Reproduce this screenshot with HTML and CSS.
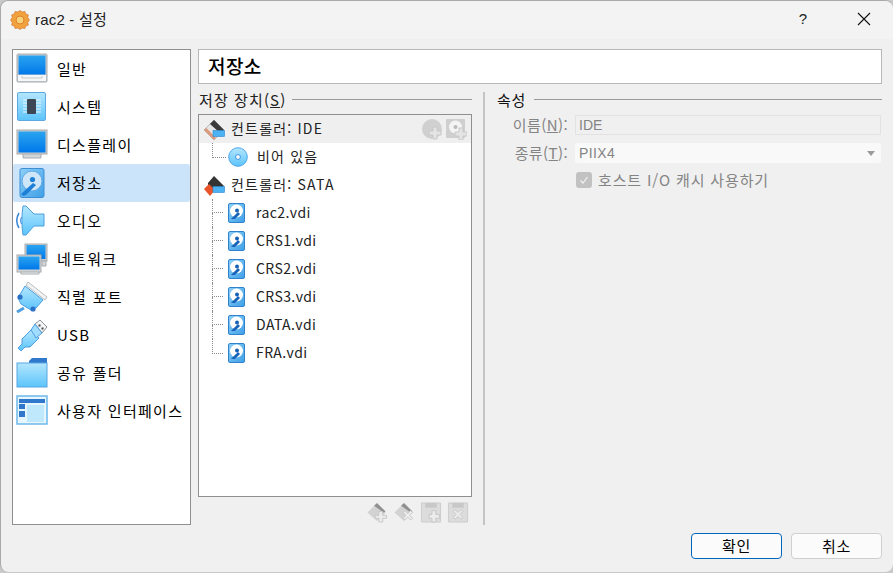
FILE: index.html
```html
<!DOCTYPE html>
<html lang="ko">
<head>
<meta charset="utf-8">
<title>rac2 - 설정</title>
<link rel="stylesheet" href="styles.css">
</head>
<body>
<svg class="defs" aria-hidden="true">
  <defs>
    <linearGradient id="blue" x1="0" y1="0" x2="0" y2="1"><stop offset="0" stop-color="#2aa4f0"/><stop offset="1" stop-color="#0078ea"/></linearGradient>
    <linearGradient id="sky" x1="0" y1="0" x2="0" y2="1"><stop offset="0" stop-color="#b4e6fe"/><stop offset="1" stop-color="#5cc4fb"/></linearGradient>
    <linearGradient id="hd" x1="0" y1="0" x2="1" y2="1"><stop offset="0" stop-color="#8dd0f8"/><stop offset="1" stop-color="#3f9fe6"/></linearGradient>

    <symbol id="i-general" viewBox="0 0 32 32">
      <rect x="1" y="1" width="30" height="28" rx="1" fill="#c9cdd0" stroke="#a8acae"/>
      <rect x="2.500" y="2.500" width="27" height="19" fill="url(#blue)"/>
      <path d="M2 22h28v6H2z" fill="#f4f6f7"/><path d="M6 23v2h20v-2" fill="none" stroke="#c4c8ca"/>
    </symbol>
    <symbol id="i-system" viewBox="0 0 32 32">
      <rect x="1.500" y="1.500" width="28" height="28" rx="1.500" fill="url(#sky)" stroke="#5ea8e0"/>
      <path d="M7 9h18M7 12h18M7 15h18M7 18h18M7 21h18" stroke="#eaf8ff" stroke-width="1.200"/>
      <rect x="11" y="8" width="9" height="15" rx="1" fill="#3d4654"/>
    </symbol>
    <symbol id="i-display" viewBox="0 0 32 32">
      <path d="M7 24h18v5H7z" fill="#d3d6d8" stroke="#a8acae"/>
      <rect x="1" y="1" width="30" height="24" fill="#c9cdd0" stroke="#a8acae"/>
      <rect x="2.500" y="2.500" width="27" height="21" fill="url(#blue)"/>
    </symbol>
    <symbol id="i-storage" viewBox="0 0 32 32">
      <rect x="4" y="1.500" width="24" height="29" rx="2" fill="url(#hd)" stroke="#3d8fd4"/>
      <circle cx="16" cy="14" r="10" fill="#cfe6f8" stroke="#5da8e6"/>
      <circle cx="16.500" cy="12.500" r="2.600" fill="#1d7fd6"/>
      <path d="M5 27l12-11 3 2-10 10-3 1z" fill="#1d7fd6"/>
    </symbol>
    <symbol id="i-audio" viewBox="0 0 32 32">
      <path d="M7 1h3l8 8h10v12H18l-8 9H7c-1.500-9-1.500-20 0-29z" fill="url(#sky)" stroke="#4d9fe0"/>
      <path d="M3 8c-3 5-3 10 0 15" fill="none" stroke="#3a86d8" stroke-width="1.500"/>
      <path d="M5.500 12c-1.200 2.500-1.200 5 0 7" fill="none" stroke="#3a86d8"/>
    </symbol>
    <symbol id="i-network" viewBox="0 0 32 32">
      <rect x="9" y="1" width="22" height="17" fill="#c9cdd0" stroke="#a8acae"/>
      <rect x="10.500" y="2" width="19" height="14" fill="url(#blue)"/>
      <path d="M26 18h4v5h-4z" fill="#d3d6d8" stroke="#a8acae"/>
      <path d="M5 26h18v5H5z" fill="#eef0f1" stroke="#a8acae"/>
      <rect x="1" y="12" width="24" height="17" fill="#d0d3d5" stroke="#a8acae"/>
      <rect x="2.500" y="13.500" width="21" height="13" fill="url(#blue)"/>
    </symbol>
    <symbol id="i-serial" viewBox="0 0 32 32">
      <path d="M8 27L1 31" stroke="#4d9fe0" stroke-width="3"/>
      <path d="M9 5l18 14-7 8-5 2-10-6-3-6z" fill="url(#sky)" stroke="#4d9fe0"/>
      <path d="M12 1l19 15-2 3L10 4z" fill="#f2f3f4" stroke="#a8acae" stroke-width=".8"/>
      <circle cx="4" cy="16" r="2.600" fill="#2a72c8"/><circle cx="17" cy="28" r="2.600" fill="#2a72c8"/>
    </symbol>
    <symbol id="i-usb" viewBox="0 0 32 32">
      <path d="M2 29l4-4 0-5 9-9 8 8-9 9h-5l-4 4z" fill="url(#sky)" stroke="#4d9fe0"/>
      <path d="M19 5l5-4 7 7-5 6z" fill="#f3f5f6" stroke="#8c9094"/>
      <rect x="22.500" y="5.500" width="2" height="2" fill="#444"/><rect x="25.500" y="8.500" width="2" height="2" fill="#444"/>
      <path d="M15 11l4-6 7 9-6 5z" fill="#9fdcfd" stroke="#4d9fe0"/>
    </symbol>
    <symbol id="i-folder" viewBox="0 0 32 32">
      <path d="M13 4l3-3h15v6H13z" fill="#2f78cc"/>
      <rect x="1" y="6" width="30" height="24" fill="url(#sky)" stroke="#56a6e4"/>
    </symbol>
    <symbol id="i-ui" viewBox="0 0 32 32">
      <rect x="1" y="1" width="30" height="28" fill="#e6f6ff" stroke="#6db8ea" stroke-width="1.500"/>
      <rect x="3" y="4" width="26" height="4" fill="#2f78cc"/>
      <rect x="3" y="9" width="6" height="5" fill="#2f78cc"/>
      <rect x="3" y="16" width="6" height="6" fill="#2f78cc"/>
      <rect x="11" y="10" width="17" height="17" fill="#bfe8fd"/>
    </symbol>
    <symbol id="i-ctrl" viewBox="0 0 23 23">
      <path d="M2 12L12 2l10 10-10 10z" fill="#e6e6e6" stroke="#a0a0a0" stroke-width=".7"/>
      <path d="M2 12l10 10 2-2L4.500 10z" fill="#dd9a7c"/>
      <path d="M12 2l10 10-4 3L8 6z" fill="#3a3a3a"/>
      <rect x="11" y="12.500" width="11.500" height="6" fill="#4db2f2" stroke="#2a86d0" stroke-width=".6"/>
    </symbol>
    <symbol id="i-ctrl-sata" viewBox="0 0 23 23">
      <path d="M12 2l10 10-3 3H6V9z" fill="#333"/>
      <path d="M2 15l5-5 6 6-5 6z" fill="#e8532a"/>
      <rect x="11" y="12.500" width="11.500" height="6" fill="#4db2f2" stroke="#2a86d0" stroke-width=".6"/>
    </symbol>
    <symbol id="i-cd" viewBox="0 0 20 20">
      <circle cx="10" cy="10" r="9.300" fill="url(#sky)" stroke="#4da6ea"/>
      <circle cx="10" cy="10" r="2.400" fill="#fff" stroke="#3d93dd"/>
    </symbol>
    <symbol id="i-vdi" viewBox="0 0 18 20">
      <rect x=".5" y=".5" width="16" height="19" rx="1.500" fill="url(#hd)" stroke="#2f82cc"/>
      <circle cx="8.500" cy="8" r="6.500" fill="#fff"/>
      <circle cx="9" cy="7.500" r="2" fill="#1763b8"/>
      <path d="M3 16l7-7 2 2-5 5z" fill="#1763b8"/>
    </symbol>
    <symbol id="i-add-cd" viewBox="0 0 22 22">
      <circle cx="11" cy="11" r="10" fill="#d0d0d0"/>
      <path d="M8 13h4v-4h4v4h4v4h-4v4h-4v-4H8z" fill="#e4e4e4" stroke="#c8c8c8"/>
    </symbol>
    <symbol id="i-add-hd" viewBox="0 0 22 22">
      <rect x="1" y="1" width="19" height="19" rx="1" fill="#cfcfcf"/>
      <circle cx="10.500" cy="9" r="6.500" fill="#f4f4f4"/>
      <circle cx="10.500" cy="9" r="2" fill="#bbb"/>
      <path d="M10 14h4v-4h4v4h4v4h-4v4h-4v-4h-4z" fill="#e4e4e4" stroke="#c8c8c8"/>
    </symbol>
    <symbol id="i-tb-add" viewBox="0 0 22 22">
      <path d="M1 11L10 2l10 9-9 9z" fill="#d2d2d2"/><path d="M8 4l3-3 9 9-2 1z" fill="#8f8f8f"/>
      <path d="M9 14h4v-4h4v4h4v3h-4v4h-4v-4H9z" fill="#ececec" stroke="#c6c6c6"/>
    </symbol>
    <symbol id="i-tb-del" viewBox="0 0 22 22">
      <path d="M1 11L10 2l10 9-9 9z" fill="#d2d2d2"/><path d="M8 4l3-3 9 9-2 1z" fill="#8f8f8f"/>
      <path d="M10 11l2-2 3 3 3-3 2 2-3 3 3 3-2 2-3-3-3 3-2-2 3-3z" fill="#ececec" stroke="#c6c6c6"/>
    </symbol>
    <symbol id="i-tb-fadd" viewBox="0 0 22 22">
      <path d="M1 1h20v20H1z" fill="#dcdcdc" stroke="#cdcdcd"/><path d="M5 1h12v5H5z" fill="#c8c8c8"/>
      <path d="M9 13h3V9h4v4h4v4h-4v4h-4v-4H9z" fill="#ececec" stroke="#c6c6c6"/>
    </symbol>
    <symbol id="i-tb-fdel" viewBox="0 0 22 22">
      <path d="M1 1h20v20H1z" fill="#dcdcdc" stroke="#cdcdcd"/><path d="M5 1h12v5H5z" fill="#c8c8c8"/>
      <path d="M6 10l2-2 3 3 3-3 2 2-3 3 3 3-2 2-3-3-3 3-2-2 3-3z" fill="#ececec" stroke="#c6c6c6"/>
    </symbol>
    <symbol id="i-app" viewBox="0 0 20 20">
      <path d="M10 .5l2.200 1.500 2.600-.6 1 2.500 2.500 1-.6 2.600L19.500 10l-1.800 2.500.6 2.600-2.500 1-1 2.500-2.600-.6L10 19.500 7.800 18l-2.600.6-1-2.500-2.500-1 .6-2.600L.5 10l1.800-2.500-.6-2.600 2.500-1 1-2.500 2.600.6z" fill="#f2a23c" stroke="#c96a2a" stroke-width=".6"/>
      <circle cx="10" cy="10" r="4" fill="#f9d27a" stroke="#d9822e"/>
    </symbol>
  </defs>
</svg>

<div class="window">
  <header class="titlebar">
    <svg class="app-icon"><use href="#i-app"/></svg>
    <span class="title">rac2 - 설정</span>
    <span class="help">?</span>
    <svg class="close" viewBox="0 0 14 14"><path d="M1 1l12 12M13 1L1 13"/></svg>
  </header>

  <div class="main">
    <nav class="sidebar">
      <div class="nav-item"><svg class="nav-icon"><use href="#i-general"/></svg><span>일반</span></div>
      <div class="nav-item"><svg class="nav-icon"><use href="#i-system"/></svg><span>시스템</span></div>
      <div class="nav-item"><svg class="nav-icon"><use href="#i-display"/></svg><span>디스플레이</span></div>
      <div class="nav-item selected"><svg class="nav-icon"><use href="#i-storage"/></svg><span>저장소</span></div>
      <div class="nav-item"><svg class="nav-icon"><use href="#i-audio"/></svg><span>오디오</span></div>
      <div class="nav-item"><svg class="nav-icon"><use href="#i-network"/></svg><span>네트워크</span></div>
      <div class="nav-item"><svg class="nav-icon"><use href="#i-serial"/></svg><span>직렬 포트</span></div>
      <div class="nav-item"><svg class="nav-icon"><use href="#i-usb"/></svg><span>USB</span></div>
      <div class="nav-item"><svg class="nav-icon"><use href="#i-folder"/></svg><span>공유 폴더</span></div>
      <div class="nav-item"><svg class="nav-icon"><use href="#i-ui"/></svg><span>사용자 인터페이스</span></div>
    </nav>

    <section class="page">
      <h1 class="page-title">저장소</h1>
      <div class="columns">
        <div class="storage">
          <div class="group-head"><span>저장 장치(<u>S</u>)</span><i class="rule"></i></div>
          <div class="tree">
            <div class="row current">
              <svg class="ctrl-icon"><use href="#i-ctrl"/></svg><span class="txt ctrl-name">컨트롤러: IDE</span>
              <span class="row-actions">
                <svg class="act-icon"><use href="#i-add-cd"/></svg>
                <svg class="act-icon"><use href="#i-add-hd"/></svg>
              </span>
            </div>
            <div class="row child cd-row">
              <span class="branch last"><b></b></span>
              <svg class="cd-icon"><use href="#i-cd"/></svg><span class="txt ctrl-name">비어 있음</span>
            </div>
            <div class="row">
              <svg class="ctrl-icon"><use href="#i-ctrl-sata"/></svg><span class="txt ctrl-name">컨트롤러: SATA</span>
            </div>
            <div class="row child"><span class="branch"><b></b><b></b></span><svg class="vdi-icon"><use href="#i-vdi"/></svg><span class="txt">rac2.vdi</span></div>
            <div class="row child"><span class="branch"><b></b><b></b></span><svg class="vdi-icon"><use href="#i-vdi"/></svg><span class="txt">CRS1.vdi</span></div>
            <div class="row child"><span class="branch"><b></b><b></b></span><svg class="vdi-icon"><use href="#i-vdi"/></svg><span class="txt">CRS2.vdi</span></div>
            <div class="row child"><span class="branch"><b></b><b></b></span><svg class="vdi-icon"><use href="#i-vdi"/></svg><span class="txt">CRS3.vdi</span></div>
            <div class="row child"><span class="branch"><b></b><b></b></span><svg class="vdi-icon"><use href="#i-vdi"/></svg><span class="txt">DATA.vdi</span></div>
            <div class="row child"><span class="branch last"><b></b></span><svg class="vdi-icon"><use href="#i-vdi"/></svg><span class="txt">FRA.vdi</span></div>
          </div>
          <div class="toolbar">
            <svg class="tb-icon"><use href="#i-tb-add"/></svg>
            <svg class="tb-icon"><use href="#i-tb-del"/></svg>
            <svg class="tb-icon"><use href="#i-tb-fadd"/></svg>
            <svg class="tb-icon"><use href="#i-tb-fdel"/></svg>
          </div>
        </div>

        <div class="props">
          <div class="group-head"><span>속성</span><i class="rule"></i></div>
          <div class="form">
            <div class="field field-name"><label>이름(<u>N</u>):</label><div class="input">IDE</div></div>
            <div class="field field-type"><label>종류(<u>T</u>):</label><div class="combo"><span>PIIX4</span><svg class="caret" viewBox="0 0 8 5"><path d="M0 0h8L4 5z"/></svg></div></div>
            <div class="check-row"><span class="checkbox"><svg viewBox="0 0 10 10"><path d="M1.500 5.500l2.500 2.500 4.500-6"/></svg></span><span class="check-label">호스트 I/O 캐시 사용하기</span></div>
          </div>
        </div>
      </div>
    </section>
  </div>

  <footer class="footer">
    <button class="btn primary">확인</button>
    <button class="btn">취소</button>
  </footer>
</div>
</body>
</html>
```

FILE: styles.css
```css
* { box-sizing: border-box; }
html, body { margin: 0; height: 100%; }
body {
  background: #c9c9c9;
  overflow: hidden;
  font-family: "Noto Sans CJK KR", "Liberation Sans", sans-serif;
  color: #000;
}
.defs { display: block; width: 0; height: 0; }

.window {
  height: 572px;
  width: 893px;
  background: #f0f0f0;
  border-top: 1px solid #a9a9a9;
  border-left: 1px solid #a9a9a9;
  border-radius: 8px;
  display: flex;
  flex-direction: column;
}

.titlebar {
  height: 38px;
  flex: none;
  background: #f3f3f3;
  border-radius: 8px 8px 0 0;
  display: flex;
  align-items: center;
  padding: 0 0 0 9px;
}
.app-icon { width: 20px; height: 20px; flex: none; margin-bottom: 1px; }
.title { margin: 0 0 4px 5px; font-size: 15px; letter-spacing: .2px; color: #222; font-family: "Liberation Sans", "Noto Sans CJK KR", sans-serif; }
.help { margin: 0 0 4px auto; font-size: 15px; font-family: "Liberation Sans", sans-serif; color: #222; }
.close { width: 14px; height: 14px; margin: 0 22px 2px 50px; fill: none; stroke: #111; stroke-width: 1.100; }

.main {
  flex: none;
  height: 476px;
  margin: 10px 0 0 11px;
  display: flex;
}

.sidebar {
  width: 179px;
  flex: none;
  background: #fff;
  border: 1px solid #8f8f8f;
  display: flex;
  flex-direction: column;
}
.nav-item {
  height: 38px;
  flex: none;
  display: flex;
  align-items: center;
  padding-left: 3px;
  font-size: 15px;
  letter-spacing: 1.300px;
  border-radius: 2px;
}
.nav-item span { margin-bottom: 2px; }
.nav-item.selected { background: #cce4fa; }
.nav-icon { width: 32px; height: 32px; flex: none; margin-right: 9px; }

.page { margin-left: 7px; width: 684px; display: flex; flex-direction: column; }
.page-title {
  margin: 0;
  height: 35px;
  flex: none;
  background: #fff;
  border: 1px solid #b9b9b9;
  padding-left: 9px;
  font-size: 19px;
  font-weight: 500;
  letter-spacing: .4px;
  line-height: 32px;
}

.columns { flex: 1; display: flex; }

.group-head {
  height: 30px;
  flex: none;
  display: flex;
  align-items: center;
  padding-left: 1px;
  font-size: 15px;
  letter-spacing: 1.100px;
  color: #222;
  gap: 6px;
}
.rule { flex: 1; height: 1px; background: #9a9a9a; }
u { text-underline-offset: 1px; }

.storage { width: 274px; flex: none; display: flex; flex-direction: column; }
.tree {
  height: 383px;
  flex: none;
  background: #fff;
  border: 1px solid #8f8f8f;
  font-size: 14px;
  letter-spacing: .4px;
  color: #222;
}
.row { height: 28px; display: flex; align-items: center; padding-left: 3px; }
.row.current { background: #efefef; }
.row-actions { margin-left: auto; margin-right: 4px; display: flex; gap: 2px; }
.act-icon { width: 22px; height: 22px; }
.ctrl-icon { width: 23px; height: 23px; flex: none; margin-right: 6px; }
.txt { margin-bottom: 2px; }
.ctrl-name { letter-spacing: 1.200px; }
.child { padding-left: 13px; }
.branch { width: 11px; flex: none; align-self: stretch; display: flex; flex-direction: column; margin-right: 5px; }
.branch b { flex: 1; border-left: 1px dotted #8a8a8a; }
.branch b:first-child { border-bottom: 1px dotted #8a8a8a; flex: none; height: 14px; }
.branch.last b:first-child { height: 15px; }
.cd-row .branch { width: 14px; margin-right: 2px; }
.cd-icon { width: 20px; height: 20px; flex: none; margin-right: 9px; }
.vdi-icon { width: 18px; height: 20px; flex: none; margin-right: 10px; }

.toolbar { display: flex; justify-content: flex-end; gap: 5px; padding: 5px 3px 0 0; }
.tb-icon { width: 22px; height: 21px; }

.props {
  margin-left: 11px;
  margin-top: 8px;
  width: 399px;
  flex: none;
  border-left: 2px solid #c4c4c4;
  padding-left: 12px;
}
.props .group-head { height: 14px; padding-left: 0; gap: 8px; letter-spacing: .8px; }
.props .group-head span { color: #111; }
.form { color: #848484; font-size: 15px; margin-top: 9px; }
.field { display: flex; align-items: center; }
.field label { width: 64px; flex: none; text-align: right; margin: 0 7px; white-space: nowrap; letter-spacing: .4px; padding-bottom: 2px; }
.field-name { height: 20px; }
.field-type { margin-top: 8px; height: 20px; }
.input, .combo { width: 306px; height: 20px; font-size: 14px; line-height: 18px; padding-left: 4px; font-family: "Liberation Sans", sans-serif; }
.input { background: #f0f0f0; border: 1px solid #e2e2e2; padding-left: 3px; }
.combo { background: #f9f9f9; border-radius: 3px; display: flex; align-items: center; letter-spacing: .4px; }
.caret { width: 8px; height: 5px; margin-left: auto; margin-right: 6px; fill: #9a9a9a; }
.check-row { display: flex; align-items: center; margin: 8px 0 0 79px; gap: 6px; height: 18px; }
.check-label { letter-spacing: .85px; padding-bottom: 2px; }
.checkbox { width: 16px; height: 16px; background: #c2c2c2; border-radius: 3px; display: flex; align-items: center; justify-content: center; }
.checkbox svg { width: 10px; height: 10px; fill: none; stroke: #f2f2f2; stroke-width: 1.200; }

.footer {
  flex: 1;
  display: flex;
  justify-content: flex-end;
  align-items: flex-start;
  gap: 9px;
  padding: 8px 11px 0 0;
}
.btn {
  width: 91px;
  height: 26px;
  background: #fbfbfb;
  border: 1px solid #cfcfcf;
  border-radius: 4px;
  font: 15px "Noto Sans CJK KR", sans-serif;
  color: #000;
  padding: 0 0 2px;
  letter-spacing: .6px;
}
.btn.primary { border-color: #0067c0; }
```
